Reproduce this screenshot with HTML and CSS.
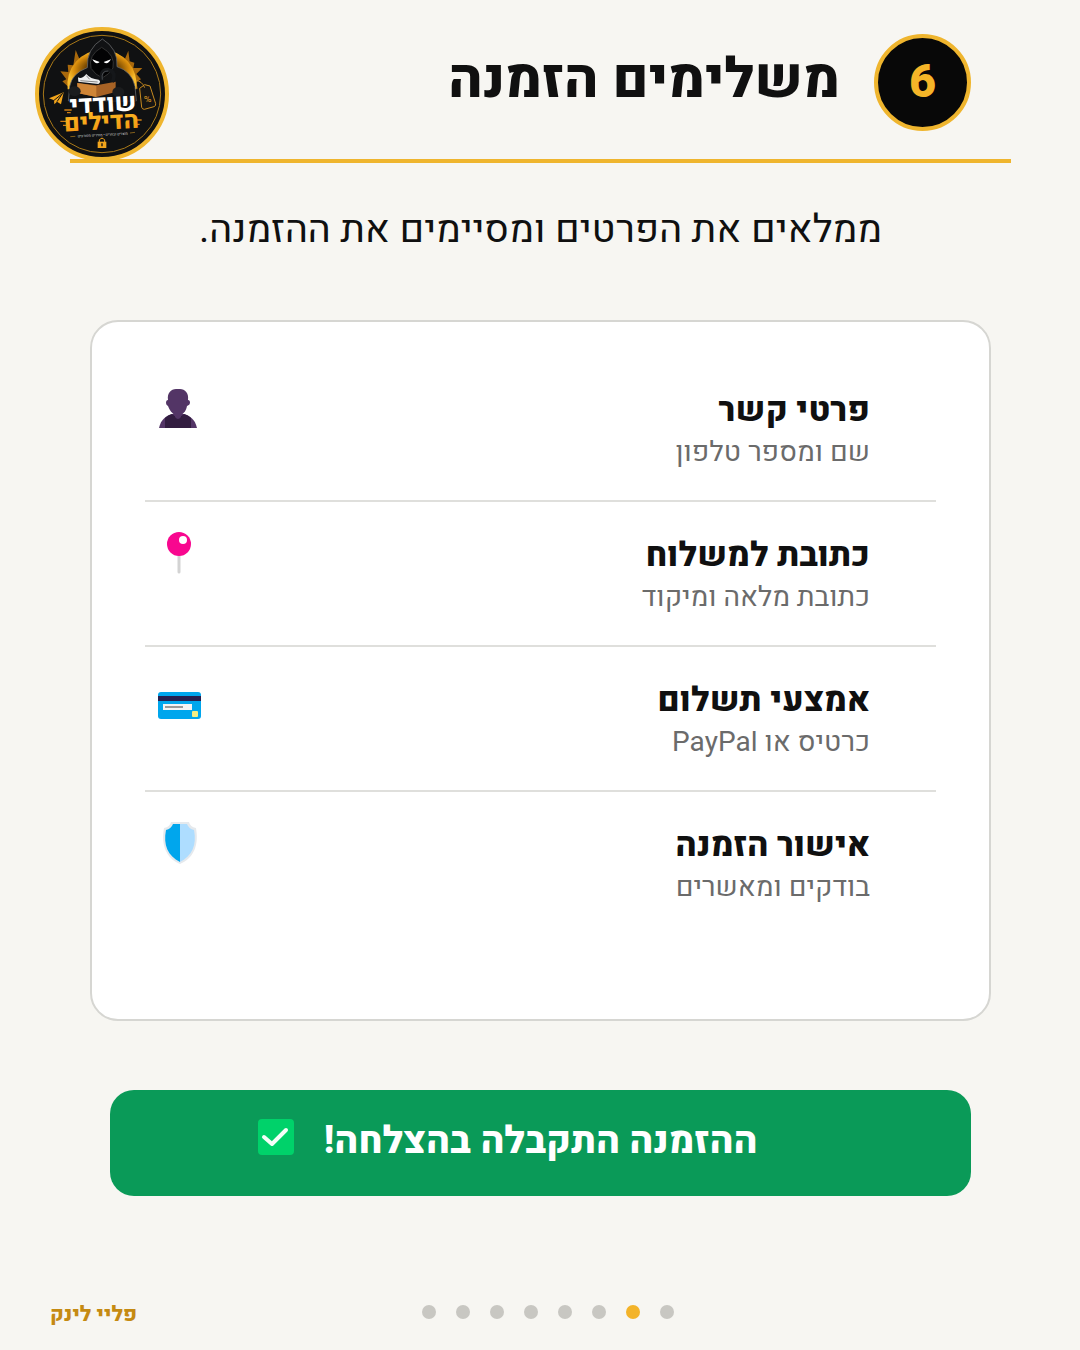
FILE: index.html
```html
<!DOCTYPE html>
<html lang="he" dir="rtl">
<head>
<meta charset="utf-8">
<meta name="viewport" content="width=device-width, initial-scale=1">
<title>משלימים הזמנה</title>
<link rel="stylesheet" href="styles.css">
</head>
<body>
<div class="page">
  <header class="header">
    <span class="step">6</span>
    <h1 class="title">משלימים הזמנה</h1>
    <svg class="logo" viewBox="30 27 402 402" role="img" aria-label="שודדי הדילים">
      <defs>
        <radialGradient id="glow"><stop offset="0.4" stop-color="#5a3500"/><stop offset="0.8" stop-color="#d98d0c"/><stop offset="1" stop-color="#f9bd2d"/></radialGradient>
        <linearGradient id="gold" x1="0" y1="0" x2="0" y2="1"><stop offset="0" stop-color="#ffc229"/><stop offset="1" stop-color="#f08c0c"/></linearGradient>
      </defs>
      <circle cx="231" cy="228" r="195" fill="#101112" stroke="#efb52e" stroke-width="12"/>
      <circle cx="231" cy="228" r="176" fill="none" stroke="#a87818" stroke-width="3"/>
      <path d="M128 205 L112 190 L124 184 L106 160 L130 162 L128 140 L145 142 L152 96 L163 122 L190 106 L275 106 L300 122 L310 98 L314 130 L328 134 L325 150 L352 150 L334 168 L348 184 L334 192 L338 212Z" fill="#a9690c"/>
      <path d="M128 214 A104 104 0 1 1 334 214 Z" fill="url(#glow)"/>
      <path d="M130 250 L134 205 Q142 165 187 149 Q184 92 232 63 Q280 92 276 146 Q320 160 330 205 L334 250 Z" fill="#111214" stroke="#77787a" stroke-width="2"/>
      <path d="M118 250 H338 V330 H118Z" fill="#101112"/>
      <path d="M198 151 Q189 111 230 88 Q272 111 264 150 Q252 170 232 180 Q210 170 198 151Z" fill="#030304" stroke="#333" stroke-width="3"/>
      <path d="M202 124 L224 132 Q213 143 202 124 M258 124 L236 132 Q247 143 258 124" fill="#fff"/>
      <path d="M157 195 L214 202 L272 191 V222 L214 237 L157 225Z" fill="#a76225"/>
      <path d="M157 195 L214 204 V237 L157 225Z" fill="#cf8537"/>
      <path d="M159 178 Q170 185 184 168 Q196 183 221 185 Q230 191 220 198 L160 191Z" fill="#eee"/>
      <path d="M166 188 L218 192 M184 173 L194 184" stroke="#888" stroke-width="3"/>
      <path d="M232 190 Q222 155 250 155 Q276 162 262 192" fill="none" stroke="#15171a" stroke-width="11"/>
      <path d="M232 185 Q227 158 250 159" fill="none" stroke="#62666b" stroke-width="2"/>
      <ellipse cx="149" cy="220" rx="18" ry="15" fill="#1b1c1e"/><ellipse cx="280" cy="222" rx="18" ry="15" fill="#1b1c1e"/>
      <path d="M72 241 L116 223 L108 259 L96 251 L88 259 L87 247Z" fill="#f2a51c"/>
      <path d="M87 247 L113 226 L96 251" fill="none" stroke="#151515" stroke-width="3"/>
      <path d="M344 211 L359 200 L375 204 L392 257 Q393 264 387 266 L358 274 Q352 274 350 268Z" fill="#161513" stroke="#c78a20" stroke-width="3"/>
      <path d="M359 209 Q350 188 333 188" fill="none" stroke="#c78a20" stroke-width="3"/>
      <text class="logo-percent" x="368" y="253" text-anchor="middle" transform="rotate(-12 368 244)">%</text>
      <path d="M118 276 H140 M126 284 H137 M106 310 H124 M114 322 H124 M334 306 H350 M334 319 H344" stroke="#ce7e13" stroke-width="4"/>
      <text class="logo-top" x="234" y="282" text-anchor="middle" transform="rotate(-3 232 260)">שודדי</text>
      <text class="logo-bottom" x="229" y="335" text-anchor="middle" transform="rotate(-3 229 310)">הדילים</text>
      <path d="M136 356 L151 355 M315 345 L330 343" stroke="#b9851f" stroke-width="2"/>
      <text class="logo-small" x="233" y="354" text-anchor="middle" transform="rotate(-3 233 350)">מוצרים נבחרים • מחירים מטורפים</text>
      <path d="M218 371 H244 V390 H218Z" fill="#f2a51c"/>
      <path d="M223 372 V366 Q231 355 239 366 V372" fill="none" stroke="#f2a51c" stroke-width="3"/>
      <path d="M231 376 V385" stroke="#111" stroke-width="4"/>
    </svg>
  </header>

  <main class="main">
    <p class="intro">ממלאים את הפרטים ומסיימים את ההזמנה.</p>

    <ul class="card">
      <li class="row">
        <div>
          <h2 class="row-title">פרטי קשר</h2>
          <p class="row-text">שם ומספר טלפון</p>
        </div>
        <svg class="icon" viewBox="0 0 44 44" aria-hidden="true">
          <path d="M1 41 C3 32 8 29 14 27 H26 C32 29 37 32 39 41Z" fill="#533566"/>
          <path d="M7 41 V31 Q10 28 14 27 Q20 33 26 27 Q30 28 33 31 V41Z" fill="#321d40"/>
          <path d="M10 13 C9 6 13 2 18 2 H22 C27 2 31 6 30 13 Q32 13 32 16 Q32 18 29 19 C28 24 26 26 23 28 V30 Q20 34 17 30 V28 C14 26 12 24 10 19 Q8 18 8 16 Q8 13 10 13Z" fill="#533566"/>
        </svg>
      </li>
      <li class="row">
        <div>
          <h2 class="row-title">כתובת למשלוח</h2>
          <p class="row-text">כתובת מלאה ומיקוד</p>
        </div>
        <svg class="icon" viewBox="0 0 44 44" aria-hidden="true">
          <path d="M21 20 V40" stroke="#d3d3d3" stroke-width="3" stroke-linecap="round"/>
          <circle cx="21" cy="12" r="12" fill="#f8078f"/>
          <circle cx="25" cy="8" r="4" fill="#fff"/>
        </svg>
      </li>
      <li class="row">
        <div>
          <h2 class="row-title">אמצעי תשלום</h2>
          <p class="row-text">כרטיס או PayPal</p>
        </div>
        <svg class="icon" viewBox="0 0 44 44" aria-hidden="true">
          <rect x="0" y="15" width="43" height="27" rx="3" fill="#00a6ed"/>
          <path d="M0 19 H43 V24 H0Z" fill="#26204f"/>
          <path d="M5 27 H34 V33 H5Z" fill="#f4f4f4"/>
          <path d="M7 30 H25" stroke="#9a9a9a" stroke-width="2"/>
          <rect x="34" y="34" width="6" height="6" rx="1" fill="#f3ef84"/>
        </svg>
      </li>
      <li class="row">
        <div>
          <h2 class="row-title">אישור הזמנה</h2>
          <p class="row-text">בודקים ומאשרים</p>
        </div>
        <svg class="icon" viewBox="0 0 44 44" aria-hidden="true">
          <path d="M13 0 H31 Q32 5 38 6 C41 23 36 36 22 42 C8 36 3 23 6 6 Q12 5 13 0Z" fill="#e5e9ed"/>
          <path d="M22 2 H29 Q31 7 36 8 C39 23 34 34 22 40Z" fill="#aeddff"/>
          <path d="M22 2 H15 Q13 7 8 8 C5 23 10 34 22 40Z" fill="#00a6ed"/>
        </svg>
      </li>
    </ul>

    <p class="banner" role="status">
      <span>ההזמנה התקבלה בהצלחה!</span>
      <svg class="check" viewBox="0 0 36 36" aria-hidden="true">
        <rect width="36" height="36" rx="4" fill="#00d26a"/>
        <path d="M6 18 L14 25 L28 11" fill="none" stroke="#f4fff8" stroke-width="4" stroke-linecap="round" stroke-linejoin="round"/>
      </svg>
    </p>
  </main>

  <footer class="footer">
    <div class="dots" role="img" aria-label="2 / 8">
      <span class="dot"></span><span class="dot dot-active"></span><span class="dot"></span><span class="dot"></span><span class="dot"></span><span class="dot"></span><span class="dot"></span><span class="dot"></span>
    </div>
    <span class="brand">פליי לינק</span>
  </footer>
</div>
</body>
</html>
```
FILE: styles.css
```css
* {
  box-sizing: border-box;
}

body {
  margin: 0;
  background: #f7f6f2;
  color: #101010;
  font-family: Heebo, Roboto, "Open Sans", "Noto Sans", sans-serif;
}

h1, h2, p, ul {
  margin: 0;
  padding: 0;
}

.page {
  min-height: 100vh;
  display: flex;
  flex-direction: column;
}

.header {
  position: relative;
  display: flex;
  align-items: flex-start;
  gap: 34px;
  margin: 0 69px 0 70px;
  padding: 34px 40px 28px;
  border-bottom: 4px solid #efb52e;
}

.step {
  display: grid;
  place-items: center;
  width: 97px;
  height: 97px;
  border: 4px solid #efb52e;
  border-radius: 50%;
  background: #080808;
  color: #f5b528;
  font-size: 47px;
  font-weight: 800;
}

.title {
  padding-top: 6px;
  font-size: 55px;
  line-height: 80px;
  font-weight: 800;
}

.logo {
  position: absolute;
  top: 27px;
  left: -35px;
  width: 134px;
  height: 134px;
}

.logo-percent { font-size: 28px; fill: #e7a224; }
.logo-top { font-size: 74px; font-weight: 800; fill: #fff; }
.logo-bottom { font-size: 72px; font-weight: 800; fill: url(#gold); }
.logo-small { font-size: 11px; fill: #ddd; }

.main {
  display: flex;
  flex-direction: column;
  padding: 37px 89px 0 90px;
}

.intro {
  font-size: 39px;
  line-height: 60px;
  text-align: center;
}

.card {
  margin-top: 60px;
  padding: 35px 53px 82px;
  border: 2px solid #d6d6d2;
  border-radius: 28px;
  background: #fff;
  list-style: none;
}

.row {
  display: flex;
  justify-content: space-between;
  height: 145px;
  padding: 30px 66px 0 13px;
  border-bottom: 2px solid #dfdfdc;
}

.row:last-child {
  border-bottom: 0;
}

.row-title {
  font-size: 34px;
  line-height: 46px;
  font-weight: 800;
}

.row-text {
  color: #6b6b6b;
  font-size: 28px;
  line-height: 40px;
}

.icon {
  width: 44px;
  height: 44px;
}

.banner {
  display: flex;
  align-items: flex-start;
  justify-content: center;
  gap: 30px;
  margin: 69px 20px 0;
  min-height: 106px;
  padding: 23px 66px 22px 0;
  border-radius: 24px;
  background: #0a9a58;
  color: #fff;
  font-size: 38px;
  line-height: 56px;
  font-weight: 800;
}

.check {
  width: 36px;
  height: 36px;
  margin-top: 6px;
}

.footer {
  display: flex;
  align-items: flex-start;
  justify-content: space-between;
  margin-top: auto;
  padding: 0 406px 21px 50px;
}

.dots {
  display: flex;
  gap: 20px;
  padding-top: 4px;
}

.dot {
  width: 14px;
  height: 14px;
  border-radius: 50%;
  background: #c8c7c2;
}

.dot-active {
  background: #f3b329;
}

.brand {
  color: #c58a12;
  font-size: 21px;
  line-height: 28px;
  font-weight: 800;
}
```
